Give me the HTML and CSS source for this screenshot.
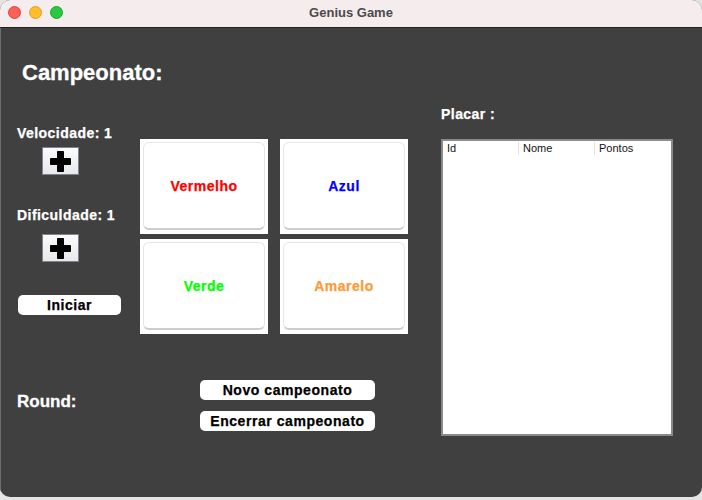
FILE: index.html
```html
<!DOCTYPE html>
<html lang="pt">
<head>
<meta charset="utf-8">
<title>Genius Game</title>
<link rel="stylesheet" href="styles.css">
</head>
<body>
<div class="window">
  <header class="titlebar">
    <div class="lights">
      <span class="light red"></span>
      <span class="light yellow"></span>
      <span class="light green"></span>
    </div>
    <div class="wintitle">Genius Game</div>
  </header>
  <main class="content">
    <section class="left-pane">
      <h1 class="heading">Campeonato:</h1>
      <div class="main-row">
        <div class="controls">
          <div class="label">Velocidade: 1</div>
          <button class="plus plus-first" aria-label="Aumentar velocidade">
            <svg width="21" height="21" viewBox="0 0 21 21"><rect x="0" y="7" width="21" height="7" rx="0.8" fill="#000"/><rect x="7" y="0" width="7" height="21" rx="0.8" fill="#000"/></svg>
          </button>
          <div class="label label-second">Dificuldade: 1</div>
          <button class="plus plus-second" aria-label="Aumentar dificuldade">
            <svg width="21" height="21" viewBox="0 0 21 21"><rect x="0" y="7" width="21" height="7" rx="0.8" fill="#000"/><rect x="7" y="0" width="7" height="21" rx="0.8" fill="#000"/></svg>
          </button>
          <button class="pill start">Iniciar</button>
        </div>
        <div class="cards">
          <div class="card"><div class="card-inner red-text">Vermelho</div></div>
          <div class="card"><div class="card-inner blue-text">Azul</div></div>
          <div class="card"><div class="card-inner green-text">Verde</div></div>
          <div class="card"><div class="card-inner orange-text">Amarelo</div></div>
        </div>
      </div>
      <div class="bottom-row">
        <div class="round">Round:</div>
        <div class="actions">
          <button class="pill wide">Novo campeonato</button>
          <button class="pill wide">Encerrar campeonato</button>
        </div>
      </div>
    </section>
    <section class="right-pane">
      <div class="label">Placar :</div>
      <div class="table">
        <div class="thead">
          <div class="th">Id</div>
          <div class="th">Nome</div>
          <div class="th">Pontos</div>
        </div>
      </div>
    </section>
  </main>
</div>
</body>
</html>
```
FILE: styles.css
```css
* { box-sizing: border-box; }
html, body { margin: 0; padding: 0; }
body {
  width: 702px;
  height: 500px;
  background: #e4e4e4;
  font-family: "Liberation Sans", Arial, sans-serif;
  overflow: hidden;
}
.window {
  width: 702px;
  height: 497px;
  border-radius: 10px;
  overflow: hidden;
  background: #404040;
  display: flex;
  flex-direction: column;
}
.titlebar {
  height: 28px;
  flex: none;
  background: #f5eced;
  border-bottom: 1px solid #232323;
  position: relative;
  display: flex;
  align-items: center;
  justify-content: center;
}
.lights {
  position: absolute;
  left: 8px;
  top: 6px;
  display: flex;
  gap: 8px;
}
.light {
  width: 13px;
  height: 13px;
  border-radius: 50%;
}
.light.red { background: #fe5f57; border: 0.5px solid #e0443e; }
.light.yellow { background: #febc2e; border: 0.5px solid #dea123; }
.light.green { background: #28c840; border: 0.5px solid #1aab29; }
.wintitle {
  font-weight: bold;
  font-size: 13px;
  color: #4b4b4b;
  margin-top: -3px;
}
.content {
  flex: 1;
  display: flex;
  border-left: 1px solid #6e6e6e;
  padding-left: 16px;
}
.left-pane {
  width: 424px;
  display: flex;
  flex-direction: column;
}
.heading {
  margin: 33px 0 0 5px;
  font-size: 22px;
  line-height: 24px;
  font-weight: bold;
  color: #fff;
  -webkit-text-stroke: 0.3px #fff;
}
.label {
  font-size: 14px;
  line-height: 16px;
  font-weight: bold;
  color: #fff;
  letter-spacing: 0.45px;
  -webkit-text-stroke: 0.25px #fff;
}
.main-row {
  margin-top: 40px;
  display: flex;
}
.controls {
  width: 123px;
  display: flex;
  flex-direction: column;
  align-items: flex-start;
}
.plus {
  width: 37px;
  height: 28px;
  margin-left: 25px;
  padding: 0;
  border: 1px solid #7c8490;
  background: linear-gradient(#fbfbfb, #e9e9e9);
  display: flex;
  align-items: center;
  justify-content: center;
}
.plus-first { margin-top: 6px; }
.label-second { margin-top: 32px; }
.plus-second { margin-top: 11px; }
.pill {
  background: #fff;
  border: none;
  border-radius: 5px;
  height: 20px;
  padding: 0;
  font-family: "Liberation Sans", Arial, sans-serif;
  font-size: 14px;
  font-weight: bold;
  color: #000;
  letter-spacing: 0.55px;
  -webkit-text-stroke: 0.25px #000;
}
.start {
  margin-top: 33px;
  margin-left: 1px;
  width: 103px;
}
.cards {
  margin-top: 14px;
  display: grid;
  grid-template-columns: 128px 128px;
  grid-template-rows: 95px 95px;
  column-gap: 12px;
  row-gap: 5px;
}
.card {
  background: #fff;
  padding: 3px 3px 4px 3px;
}
.card-inner {
  height: 100%;
  border: 1px solid #e6e6e6;
  border-bottom: 2px solid #cdcdcd;
  border-radius: 6px;
  display: flex;
  align-items: center;
  justify-content: center;
  font-size: 14px;
  font-weight: bold;
  letter-spacing: 0.5px;
  -webkit-text-stroke: 0.25px currentColor;
}
.red-text { color: #ff0000; }
.blue-text { color: #0000ff; }
.green-text { color: #00ff00; }
.orange-text { color: #ff9933; }
.bottom-row {
  margin-top: 46px;
  display: flex;
}
.round {
  width: 183px;
  margin-top: 12px;
  font-size: 17px;
  line-height: 20px;
  font-weight: bold;
  color: #fff;
  -webkit-text-stroke: 0.3px #fff;
}
.actions {
  display: flex;
  flex-direction: column;
  gap: 11px;
}
.wide { width: 175px; }
.right-pane {
  margin-top: 78px;
  display: flex;
  flex-direction: column;
}
.table {
  margin-top: 17px;
  width: 232px;
  height: 297px;
  background: #fff;
  border: 2px solid #8a8a8a;
}
.thead {
  display: flex;
  height: 14px;
  padding-top: 1px;
}
.th {
  width: 76px;
  font-size: 11px;
  line-height: 13px;
  padding-left: 4px;
  color: #111;
  border-right: 1px solid #e2e2e2;
}
.th:last-child { border-right: none; }
```
